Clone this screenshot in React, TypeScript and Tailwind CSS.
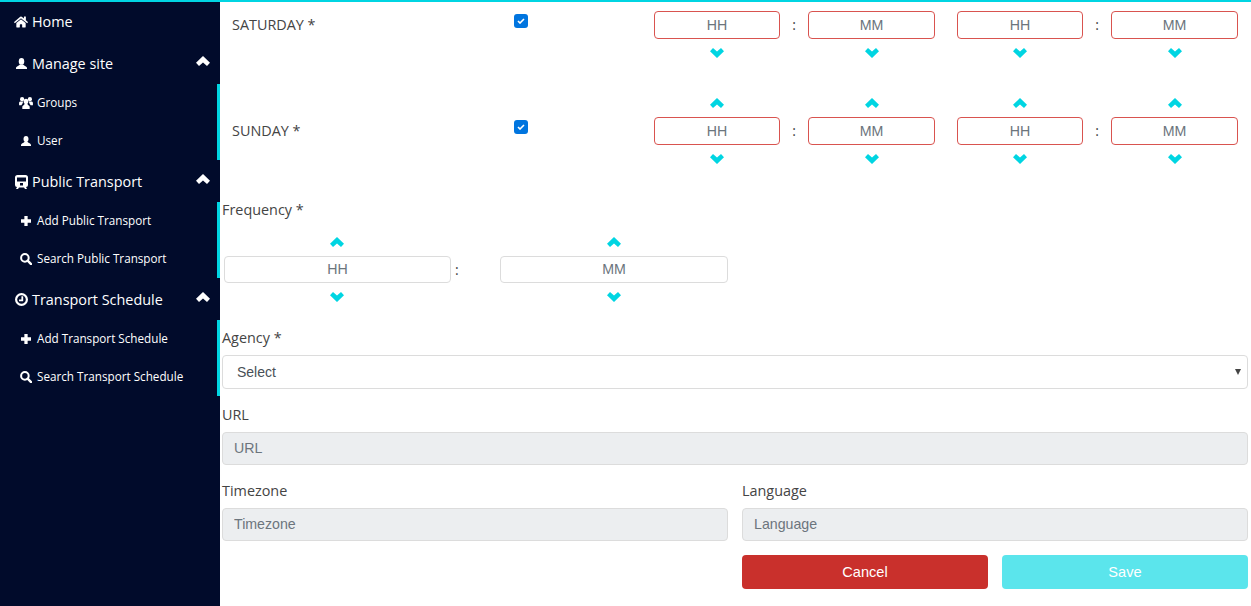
import React from "react";
import { FaHome } from "react-icons/fa";

const Chevron = ({ up, color = "#00d5e2" }: { up?: boolean; color?: string }) => (
  <svg width="14" height="10" viewBox="0 0 14 10" className={up ? "rotate-180" : ""}>
    <path d="M0 3.200 L3 0 L7 3.600 L11 0 L14 3.200 L7 10Z" fill={color} />
  </svg>
);

const TrainIcon = () => (
  <svg width="13" height="14" viewBox="0 0 13 14" fill="white">
    <path
      fillRule="evenodd"
      d="M2.500 0h8A2.500 2.500 0 0 1 13 2.500V10a2 2 0 0 1-2 2l1 2H10l-1-1.500H4L3 14H1l1-2a2 2 0 0 1-2-2V2.500A2.500 2.500 0 0 1 2.500 0zM2 2.500v4h9v-4zM5 8v2.500h3V8z"
    />
  </svg>
);

const ClockIcon = () => (
  <svg width="13" height="13" viewBox="0 0 13 13">
    <circle cx="6.500" cy="6.500" r="5.400" fill="none" stroke="white" strokeWidth="2.200" />
    <path d="M7.300 3.200V7.400H4" fill="none" stroke="white" strokeWidth="1.800" />
  </svg>
);

const UserIcon = ({ w = 11 }: { w?: number }) => (
  <svg width={w} height={(w * 13) / 12} viewBox="0 0 12 13" fill="white">
    <ellipse cx="6" cy="3.700" rx="3" ry="3.700" />
    <path d="M0 13V10.700C0 9 3 8.800 4 7.300H8C9 8.800 12 9 12 10.700V13Z" />
  </svg>
);

const UsersIcon = () => (
  <svg width="14" height="12" viewBox="0 0 15 13" fill="white">
    <circle cx="3.300" cy="2.400" r="2.300" />
    <circle cx="11.700" cy="2.400" r="2.300" />
    <path d="M0 9V6.500C0 5.500 1 5 2 5H4.500C4 6 4 6.500 3.500 7.500C3 8 2.500 8.500 2.500 9Z" />
    <path d="M15 9V6.500C15 5.500 14 5 13 5H10.500C11 6 11 6.500 11.500 7.500C12 8 12.500 8.500 12.500 9Z" />
    <ellipse cx="7.500" cy="5" rx="2.500" ry="3" />
    <path d="M3.500 13V10.500C3.500 9 5.500 9 6 7.500H9C9.500 9 11.500 9 11.500 10.500V13Z" />
  </svg>
);

const PlusIcon = () => (
  <svg width="10" height="10" viewBox="0 0 11 11" fill="white">
    <path d="M3.700 0H7.300V3.700H11V7.300H7.300V11H3.700V7.300H0V3.700H3.700Z" />
  </svg>
);

const SearchIcon = () => (
  <svg width="12" height="12" viewBox="0 0 13 13">
    <circle cx="5.300" cy="5.300" r="4.100" fill="none" stroke="white" strokeWidth="2.200" />
    <path d="M8.300 8.300L12 12" fill="none" stroke="white" strokeWidth="2.600" strokeLinecap="round" />
  </svg>
);

const Heading = ({
  icon,
  label,
  chevron = true,
  className = "h-[42px] pt-[1px]",
}: {
  icon: React.ReactNode;
  label: string;
  chevron?: boolean;
  className?: string;
}) => (
  <div className={`flex items-center pl-[15px] pr-[10px] text-white text-[14.4px] ${className}`}>
    <span className="w-[17px] flex items-center shrink-0">{icon}</span>
    <span className="flex-1">{label}</span>
    {chevron && (
      <span className="-mt-[6px]">
        <Chevron up color="#ffffff" />
      </span>
    )}
  </div>
);

const SubGroup = ({ items }: { items: { icon: React.ReactNode; label: string }[] }) => (
  <div className="border-r-[3px] border-[#00d5e2]">
    {items.map((it) => (
      <div key={it.label} className="h-[38px] flex items-center pl-[19px] text-white text-[11.7px]">
        <span className="w-[18px] flex items-center shrink-0">{it.icon}</span>
        <span>{it.label}</span>
      </div>
    ))}
  </div>
);

const baseInput =
  "rounded-[4px] bg-white text-center text-[14.2px] outline-none placeholder:text-[#6c757d] placeholder:opacity-100 font-['Liberation_Sans',sans-serif]";

const TimeCol = ({
  ph,
  up,
  w = "w-[126px]",
  box = "h-[28px] border-[#d9534f]",
  chev = "",
}: {
  ph: string;
  up?: boolean;
  w?: string;
  box?: string;
  chev?: string;
}) => (
  <div className={`flex flex-col items-center ${w}`}>
    {up && (
      <div className={`h-[28px] flex items-center justify-center ${chev}`}>
        <Chevron up />
      </div>
    )}
    <input placeholder={ph} className={`${baseInput} w-full border ${box}`} />
    <div className={`h-[28px] flex items-center justify-center ${chev}`}>
      <Chevron />
    </div>
  </div>
);

const Colon = ({ w, up }: { w: string; up?: boolean }) => (
  <div className={`${w} text-center text-[14px] text-[#444] leading-[28px] ${up ? "mt-[28px]" : ""}`}>:</div>
);

const DayRow = ({ day, up, className = "" }: { day: string; up?: boolean; className?: string }) => (
  <div className={`flex pl-[10px] ${className}`}>
    <div className={`w-[282px] text-[14.4px] leading-[20px] text-[#444] ${up ? "mt-[32px]" : "mt-[4px]"}`}>{day}</div>
    <div className={`w-[140px] ${up ? "mt-[31px]" : "mt-[3px]"}`}>
      <div className="relative w-[14px] h-[14px]">
        <input
          type="checkbox"
          defaultChecked
          className="block w-[14px] h-[14px] m-0 appearance-none rounded-[3px] bg-[#0075df]"
        />
        <svg width="8" height="6" viewBox="0 0 8 6" className="absolute left-[3px] top-[4px] pointer-events-none">
          <path d="M1 3L3 5L7 1" fill="none" stroke="white" strokeWidth="1.600" />
        </svg>
      </div>
    </div>
    <TimeCol ph="HH" up={up} />
    <Colon w="w-[28px]" up={up} />
    <TimeCol ph="MM" up={up} w="w-[127px]" />
    <div className="w-[22px]" />
    <TimeCol ph="HH" up={up} />
    <Colon w="w-[28px]" up={up} />
    <TimeCol ph="MM" up={up} w="w-[127px]" />
  </div>
);

const Label = ({ children, className = "" }: { children: React.ReactNode; className?: string }) => (
  <div className={`text-[14.4px] leading-[20px] text-[#444] ${className}`}>{children}</div>
);

const ReadOnly = ({ ph }: { ph: string }) => (
  <input
    disabled
    placeholder={ph}
    className="block w-full h-[33px] mt-[7px] px-[11px] pb-[2px] rounded-[4px] border border-[#dcdcdc] bg-[#eceef0] text-[14.2px] placeholder:text-[#6c757d] placeholder:opacity-100 font-['Liberation_Sans',sans-serif]"
  />
);

export default function App() {
  return (
    <div className="h-[606px] w-[1251px] overflow-hidden flex flex-col bg-white font-['Open_Sans',sans-serif]">
      <div className="h-[2px] bg-[#00d5e2] shrink-0" />
      <div className="flex flex-1 min-h-0">
        <aside className="w-[220px] shrink-0 bg-[#010b2b]">
          <Heading
            icon={<span className="-ml-[1px]"><FaHome size={14} color="white" /></span>}
            label="Home"
            chevron={false}
            className="h-[40px]"
          />
          <Heading icon={<span className="ml-[1px]"><UserIcon w={11} /></span>} label="Manage site" />
          <SubGroup
            items={[
              { icon: <UsersIcon />, label: "Groups" },
              { icon: <span className="ml-[2px]"><UserIcon w={10} /></span>, label: "User" },
            ]}
          />
          <Heading icon={<TrainIcon />} label="Public Transport" />
          <SubGroup
            items={[
              { icon: <span className="ml-[2px]"><PlusIcon /></span>, label: "Add Public Transport" },
              { icon: <span className="ml-[1px]"><SearchIcon /></span>, label: "Search Public Transport" },
            ]}
          />
          <Heading icon={<ClockIcon />} label="Transport Schedule" />
          <SubGroup
            items={[
              { icon: <span className="ml-[2px]"><PlusIcon /></span>, label: "Add Transport Schedule" },
              { icon: <span className="ml-[1px]"><SearchIcon /></span>, label: "Search Transport Schedule" },
            ]}
          />
        </aside>
        <main className="flex-1 min-w-0 pl-[2px] pr-[3px]">
          <DayRow day="SATURDAY *" className="pt-[9px]" />
          <DayRow day="SUNDAY *" up className="mt-[22px]" />
          <Label className="mt-[27px]">Frequency *</Label>
          <div className="flex pl-[2px] mt-[8px]">
            <TimeCol ph="HH" up w="w-[227px]" box="h-[27px] pb-[2px] border-[#dcdcdc]" chev="pr-[1px]" />
            <div className="w-[49px] pl-[4px] mt-[28px] text-[14px] leading-[27px] text-[#444]">:</div>
            <TimeCol ph="MM" up w="w-[228px]" box="h-[27px] pb-[2px] border-[#dcdcdc]" chev="pr-[1px]" />
          </div>
          <Label className="mt-[17px]">Agency *</Label>
          <div className="relative mt-[7px]">
            <select className="block w-full h-[34px] pl-[14px] rounded-[4px] border border-[#dcdcdc] bg-white text-[14px] text-[#495057] appearance-none font-['Liberation_Sans',sans-serif]">
              <option>Select</option>
            </select>
            <svg width="6" height="6" viewBox="0 0 6 6" className="absolute right-[7px] top-[14px]">
              <path d="M0 0H6L3 6Z" fill="#444" />
            </svg>
          </div>
          <Label className="mt-[16px]">URL</Label>
          <ReadOnly ph="URL" />
          <div className="grid grid-cols-2 gap-x-[14px] mt-[16px]">
            <div>
              <Label>Timezone</Label>
              <ReadOnly ph="Timezone" />
            </div>
            <div>
              <Label>Language</Label>
              <ReadOnly ph="Language" />
            </div>
          </div>
          <div className="grid grid-cols-2 gap-x-[14px] mt-[14px]">
            <div />
            <div className="flex gap-x-[14px]">
              <button className="flex-1 h-[34px] pt-[1px] rounded-[4px] bg-[#c9302c] text-white text-[14.6px] font-['Liberation_Sans',sans-serif]">
                Cancel
              </button>
              <button className="flex-1 h-[34px] pt-[1px] rounded-[4px] bg-[#5be5ec] text-white text-[14.6px] font-['Liberation_Sans',sans-serif]">
                Save
              </button>
            </div>
          </div>
        </main>
      </div>
    </div>
  );
}
